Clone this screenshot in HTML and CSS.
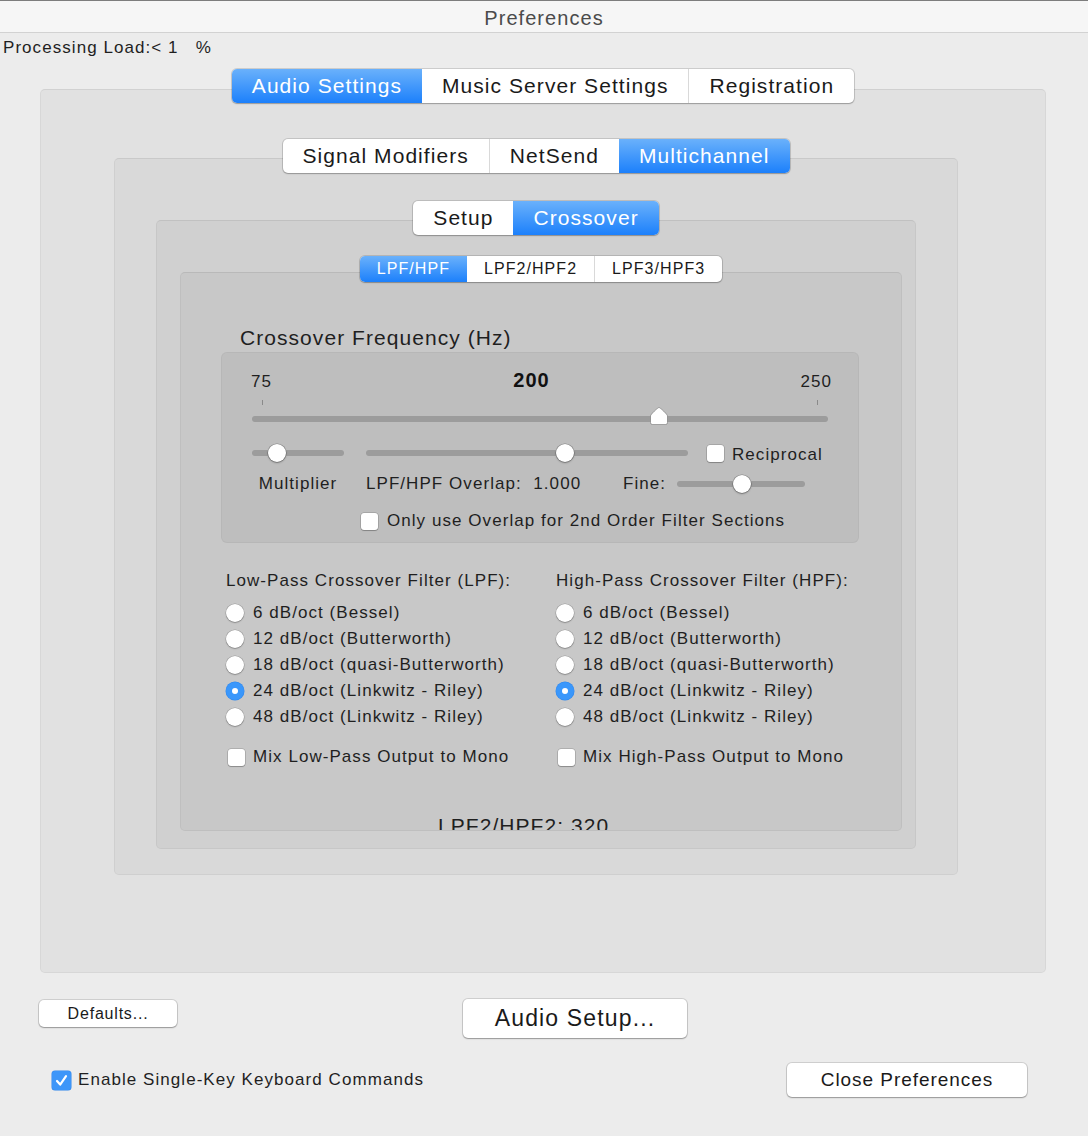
FILE: index.html
```html
<!DOCTYPE html>
<html>
<head>
<meta charset="utf-8">
<title>Preferences</title>
<link rel="stylesheet" href="styles.css">
</head>
<body>
<div class="titlebar">Preferences</div>
<div class="load">Processing Load:&lt; 1&nbsp;&nbsp;&nbsp;%</div>

<div class="group g1">
  <div class="seg big"><span class="on">Audio Settings</span><span>Music Server Settings</span><span>Registration</span></div>
  <div class="box b1">
    <div class="group">
      <div class="seg big"><span>Signal Modifiers</span><span>NetSend</span><span class="on">Multichannel</span></div>
      <div class="box b2">
        <div class="group">
          <div class="seg big"><span>Setup</span><span class="on">Crossover</span></div>
          <div class="box b3">
            <div class="group">
              <div class="seg small"><span class="on">LPF/HPF</span><span>LPF2/HPF2</span><span>LPF3/HPF3</span></div>
              <div class="box b4">
                <div class="caption">Crossover Frequency (Hz)</div>
                <div class="sbox">
                  <div class="scale"><span class="lo">75</span><span class="val">200</span><span class="hi">250</span></div>
                  <div class="ticks"><i></i><i></i></div>
                  <div class="track main">
                    <svg class="pointer" style="left:70.7%" viewBox="0 0 20 20" width="20" height="20"><path d="M10 1.5 C11 1.5 18.5 8.5 18.5 10 V16.5 A2 2 0 0 1 16.5 18.5 H3.5 A2 2 0 0 1 1.5 16.5 V10 C1.5 8.5 9 1.5 10 1.5 Z" fill="#fff" stroke="rgba(0,0,0,0.28)" stroke-width="1"/></svg>
                  </div>
                  <div class="rowb">
                    <div class="track t-mult"><span class="knob" style="left:27.2%"></span></div>
                    <div class="track t-over"><span class="knob" style="left:61.8%"></span></div>
                    <span class="chk c-recip"></span><span class="recip">Reciprocal</span>
                  </div>
                  <div class="rowc">
                    <span class="l-mult">Multiplier</span>
                    <span class="l-over">LPF/HPF Overlap:&nbsp; 1.000</span>
                    <span>Fine:</span>
                    <div class="track t-fine"><span class="knob" style="left:50.8%"></span></div>
                  </div>
                  <div class="rowd"><span class="chk"></span><span class="lab">Only use Overlap for 2nd Order Filter Sections</span></div>
                </div>
                <div class="filters">
                  <div class="col">
                    <div class="head">Low-Pass Crossover Filter (LPF):</div>
                    <div class="opts">
                      <div class="opt"><span class="radio"></span><span class="lab">6 dB/oct (Bessel)</span></div>
                      <div class="opt"><span class="radio"></span><span class="lab">12 dB/oct (Butterworth)</span></div>
                      <div class="opt"><span class="radio"></span><span class="lab">18 dB/oct (quasi-Butterworth)</span></div>
                      <div class="opt"><span class="radio on"></span><span class="lab">24 dB/oct (Linkwitz - Riley)</span></div>
                      <div class="opt"><span class="radio"></span><span class="lab">48 dB/oct (Linkwitz - Riley)</span></div>
                    </div>
                    <div class="opt mix"><span class="chk"></span><span class="lab">Mix Low-Pass Output to Mono</span></div>
                  </div>
                  <div class="col">
                    <div class="head">High-Pass Crossover Filter (HPF):</div>
                    <div class="opts">
                      <div class="opt"><span class="radio"></span><span class="lab">6 dB/oct (Bessel)</span></div>
                      <div class="opt"><span class="radio"></span><span class="lab">12 dB/oct (Butterworth)</span></div>
                      <div class="opt"><span class="radio"></span><span class="lab">18 dB/oct (quasi-Butterworth)</span></div>
                      <div class="opt"><span class="radio on"></span><span class="lab">24 dB/oct (Linkwitz - Riley)</span></div>
                      <div class="opt"><span class="radio"></span><span class="lab">48 dB/oct (Linkwitz - Riley)</span></div>
                    </div>
                    <div class="opt mix"><span class="chk"></span><span class="lab">Mix High-Pass Output to Mono</span></div>
                  </div>
                </div>
                <div class="next">LPF2/HPF2: 320</div>
              </div>
            </div>
          </div>
        </div>
      </div>
    </div>
  </div>
</div>

<div class="foot1">
  <button class="btn defaults">Defaults...</button>
  <button class="btn audio">Audio Setup...</button>
</div>
<div class="foot2">
  <div class="enable">
    <span class="chk checked"><svg viewBox="0 0 19 19" width="19" height="19"><path d="M5 10 L8.2 13.6 L14 5.2" fill="none" stroke="#fff" stroke-width="2.2" stroke-linecap="round" stroke-linejoin="round"/></svg></span>
    <span class="lab">Enable Single-Key Keyboard Commands</span>
  </div>
  <button class="btn close">Close Preferences</button>
</div>
</body>
</html>
```

FILE: styles.css
```css
* { box-sizing: border-box; }
html, body { margin: 0; padding: 0; }
body {
  width: 1088px;
  height: 1136px;
  overflow: hidden;
  background: #ececec;
  font-family: "Liberation Sans", Arial, sans-serif;
  color: #1f1f1f;
  letter-spacing: 0.066em;
}

.titlebar {
  height: 33px;
  border-top: 1px solid #7d7d7d;
  border-bottom: 1px solid #d2d2d2;
  background: #f6f6f6;
  text-align: center;
  font-size: 20px;
  line-height: 34px;
  color: #4b4b4b;
}

.load {
  margin-top: 5px;
  padding-left: 3px;
  font-size: 17px;
  line-height: 20px;
}

/* tab groups */
.g1 { margin: 11px 42px 0 40px; }

.seg {
  position: relative;
  z-index: 1;
  display: flex;
  width: max-content;
  margin: 0 auto;
  background: #fff;
  border-radius: 5px;
  box-shadow: 0 0 0 1px rgba(0,0,0,0.13), 0 1px 1.5px rgba(0,0,0,0.22);
  overflow: hidden;
}
.seg span {
  display: block;
  color: #1a1a1a;
}
.seg span + span { border-left: 1px solid #d9d9d9; }
.seg span.on + span, .seg span + span.on { border-left: none; }
.seg span.on {
  color: #fff;
  background: linear-gradient(#6ab1fb, #1c80fb);
}
.seg.big span {
  font-size: 21px;
  line-height: 34px;
  padding: 0 20px;
}
.seg.small span {
  font-size: 16px;
  line-height: 26px;
  padding: 0 17px;
}

.box {
  border: 1px solid rgba(0,0,0,0.045);
  border-top-color: rgba(0,0,0,0.07);
  border-radius: 5px;
}
.b1 { margin-top: -14px; height: 884px; padding: 49px 87px 0 73px; background: #e1e1e1; }
.b2 { margin-top: -15px; height: 717px; padding: 42px 41px 0 41px; background: #d9d9d9; }
.b3 { margin-top: -15px; height: 629px; padding: 35px 13px 0 23px; background: #d0d0d0; }
.b4 { margin-top: -10px; height: 559px; padding: 54px 0 0 40px; background: #c8c8c8; overflow: hidden; }

.caption {
  margin-left: 19px;
  font-size: 21px;
  line-height: 22px;
}

/* slider group */
.sbox {
  margin-top: 3px;
  width: 638px;
  height: 191px;
  border-radius: 6px;
  background: #bebebe;
  box-shadow: inset 0 0 0 1px rgba(0,0,0,0.035);
  padding-top: 18px;
  font-size: 17px;
}
.scale {
  display: flex;
  align-items: baseline;
  height: 20px;
  line-height: 20px;
  padding: 0 27px 0 30px;
}
.scale .lo, .scale .hi { flex: 1; }
.scale .hi { text-align: right; }
.scale .val { font-weight: bold; font-size: 20px; margin-right: 20px; color: #111; }

.ticks {
  margin-top: 10px;
  height: 5px;
  padding: 0 41px;
  display: flex;
  justify-content: space-between;
}
.ticks i { display: block; width: 1px; background: #8a8a8a; }

.track {
  position: relative;
  height: 6px;
  border-radius: 3px;
  background: #9c9c9c;
}
.track.main { margin: 11px 31px 0; }
.pointer {
  position: absolute;
  top: -10px;
  margin-left: -10px;
}
.knob {
  position: absolute;
  top: 50%;
  width: 18px;
  height: 18px;
  margin: -9px 0 0 -9px;
  border-radius: 50%;
  background: #fff;
  box-shadow: 0 0 0 0.5px rgba(0,0,0,0.3), 0 1px 2px rgba(0,0,0,0.3);
}

.rowb {
  display: flex;
  align-items: center;
  height: 24px;
  margin-top: 19px;
  padding-left: 31px;
}
.t-mult { width: 92px; }
.t-over { width: 322px; margin-left: 22px; }
.c-recip { margin-left: 19px; }
.recip { margin-left: 8px; position: relative; top: 2px; }

.rowc {
  display: flex;
  align-items: center;
  height: 22px;
  margin-top: 8px;
  padding-left: 31px;
}
.l-mult { width: 92px; text-align: center; }
.l-over { width: 257px; margin-left: 22px; }
.t-fine { width: 128px; margin-left: 11px; }

.rowd {
  display: flex;
  align-items: center;
  height: 22px;
  margin-top: 15px;
  padding-left: 140px;
}
.rowd .lab { margin-left: 9px; }

/* controls */
.chk {
  display: block;
  flex: none;
  width: 17px;
  height: 17px;
  border-radius: 3px;
  background: #fff;
  box-shadow: 0 0 0 0.5px rgba(0,0,0,0.25), 0 1px 1px rgba(0,0,0,0.2);
}
.chk.checked {
  width: 19px;
  height: 19px;
  background: #3d96f9;
  box-shadow: 0 0 0 0.5px #2f86ec;
}
.chk svg { display: block; }

.radio {
  display: grid;
  place-items: center;
  flex: none;
  width: 18px;
  height: 18px;
  border-radius: 50%;
  background: #fff;
  box-shadow: 0 0 0 0.5px rgba(0,0,0,0.22), 0 1px 1.5px rgba(0,0,0,0.22);
}
.radio.on {
  background: #3a97fb;
  box-shadow: 0 0 0 0.5px #2d87ee;
}
.radio.on::after {
  content: "";
  width: 6px;
  height: 6px;
  border-radius: 50%;
  background: #fff;
}

/* filter columns */
.filters {
  display: flex;
  margin-top: 27px;
  padding-left: 5px;
  font-size: 17px;
}
.col { width: 330px; }
.head { line-height: 22px; }
.opts { margin-top: 8px; }
.opt {
  display: flex;
  align-items: center;
  height: 26px;
}
.opt .lab { margin-left: 9px; }
.opt.mix { margin-top: 14px; padding-left: 2px; }
.opt.mix .lab { margin-left: 8px; }

.next {
  margin-top: 45px;
  padding-left: 217px;
  font-size: 21px;
  line-height: 22px;
}

/* footer */
.btn {
  display: block;
  border: none;
  background: #fff;
  border-radius: 5px;
  box-shadow: 0 0 0 1px rgba(0,0,0,0.12), 0 1px 1.5px rgba(0,0,0,0.28);
  font-family: inherit;
  letter-spacing: 0.05em;
  color: #1a1a1a;
  padding: 0;
}
.foot1 {
  display: flex;
  align-items: flex-start;
  margin-top: 26px;
}
.defaults {
  margin: 1px 0 0 39px;
  width: 138px;
  height: 27px;
  font-size: 16px;
}
.audio {
  margin-left: 286px;
  width: 224px;
  height: 39px;
  font-size: 23px;
}
.foot2 {
  display: flex;
  align-items: center;
  justify-content: space-between;
  margin-top: 25px;
  padding: 0 61px 0 52px;
}
.enable { display: flex; align-items: center; font-size: 17px; }
.enable .lab { margin-left: 7px; }
.close {
  width: 240px;
  height: 34px;
  font-size: 19px;
}
```
